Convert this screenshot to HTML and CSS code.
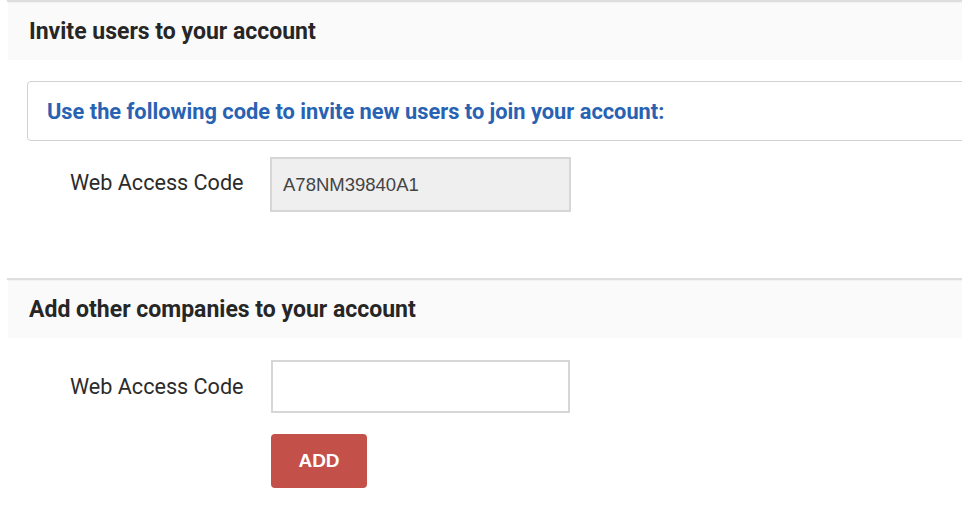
FILE: index.html
```html
<!DOCTYPE html>
<html lang="en">
<head>
  <meta charset="UTF-8">
  <title>Account Access</title>
  <meta name="viewport" content="width=device-width, initial-scale=1.0">
  <link rel="stylesheet" href="styles.css">
</head>
<body>
  <section class="panel">
    <div class="panel-head">Invite users to your account</div>
    <div class="notice">Use the following code to invite new users to join your account:</div>
    <div class="form-row">
      <label class="form-label" for="code">Web Access Code</label>
      <input class="form-input readonly" id="code" type="text" value="A78NM39840A1" readonly>
    </div>
  </section>

  <section class="panel panel-add">
    <div class="panel-head">Add other companies to your account</div>
    <div class="form-row">
      <label class="form-label" for="newcode">Web Access Code</label>
      <input class="form-input" id="newcode" type="text">
    </div>
    <div class="form-actions">
      <button class="btn-add">ADD</button>
    </div>
  </section>
</body>
</html>
```

FILE: styles.css
```css
body {
  margin: 0;
  font-family: Roboto, 'Liberation Sans', Arial, sans-serif;
  background: #fff;
  color: #333;
  overflow: hidden;
}

/* Panels */
.panel {
  margin-left: 7px;
  border-top: 2px solid #dedede;
}
.panel-head {
  margin-left: 1px;
  height: 57px;
  padding-left: 21px;
  display: flex;
  align-items: center;
  background: #fafafa;
  font-size: 23px;
  font-weight: 700;
  color: #262626;
  border-top: 1px solid #f2f2f2;
}
.panel-add {
  margin-top: 66px;
}

/* Notice box */
.notice {
  margin: 21px -20px 0 20px;
  height: 58px;
  padding-left: 19px;
  display: flex;
  align-items: center;
  border: 1px solid #d2d2d2;
  border-radius: 4px;
  font-size: 21.8px;
  font-weight: 700;
  color: #2862b3;
}

/* Form rows */
.form-row {
  display: flex;
  align-items: center;
  margin-top: 16px;
  padding-left: 63px;
}
.panel-add .form-row {
  margin-top: 22px;
}
.form-label {
  width: 200px;
  margin-top: -4px;
  font-size: 21.6px;
  color: #2b2b2b;
}
.panel-add .form-label {
  margin-top: 0;
}
.form-input {
  box-sizing: border-box;
  width: 301px;
  height: 55px;
  padding: 0 11px;
  border: 2px solid #d6d6d6;
  background: #fff;
  font-family: 'Liberation Sans', Arial, sans-serif;
  font-size: 18.5px;
  color: #444;
  outline: none;
}
.panel-add .form-input {
  width: 299px;
  height: 53px;
  margin-left: 1px;
}
.form-input.readonly {
  background: #efefef;
}

.form-actions {
  margin-top: 21px;
  padding-left: 264px;
}
.btn-add {
  width: 96px;
  height: 54px;
  border: none;
  border-radius: 4px;
  background: #c4504a;
  color: #fff;
  font-family: 'Liberation Sans', Arial, sans-serif;
  font-size: 19px;
  font-weight: 700;
  cursor: pointer;
}
.btn-add:hover { background: #ad433e; }
```
